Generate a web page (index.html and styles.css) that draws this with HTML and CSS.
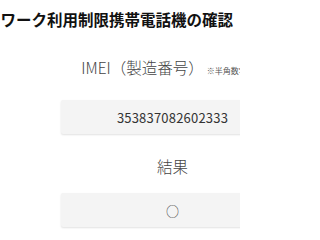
FILE: index.html
```html
<!DOCTYPE html>
<html lang="ja">
<head>
<meta charset="utf-8">
<link rel="stylesheet" href="styles.css">
</head>
<body>
<div class="page">
  <h1 class="title">ネットワーク利用制限携帯電話機の確認</h1>
  <div class="form">
    <div class="label label-imei"><span class="label-main">IMEI（製造番号）</span><span class="note">※半角数字15桁</span></div>
    <div class="field field-imei">353837082602333</div>
    <div class="label label-result"><span class="label-main">結果</span></div>
    <div class="field result">○</div>
  </div>
</div>
</body>
</html>
```
FILE: styles.css
```css
html, body {
  margin: 0;
  padding: 0;
  background: #fff;
}
body {
  font-family: "Noto Sans CJK JP", "Noto Sans", sans-serif;
  color: #333;
}
.page {
  width: 240px;
  height: 240px;
  overflow: hidden;
}
.title {
  margin: 0 0 0 -46px;
  padding-top: 9px;
  font-size: 15.5px;
  line-height: 20px;
  font-weight: 700;
  color: #111;
  white-space: nowrap;
}
.form {
  margin-left: 61px;
  width: 223px;
  display: flex;
  flex-direction: column;
}
.label {
  display: flex;
  justify-content: center;
  align-items: baseline;
  white-space: nowrap;
  height: 24px;
}
.label-imei {
  margin-top: 27px;
}
.label-result {
  margin-top: 21px;
}
.label-main {
  font-size: 15.5px;
  font-weight: 300;
  color: #444;
}
.note {
  margin-left: 3px;
  font-size: 8px;
  color: #555;
}
.field {
  margin-top: 14px;
  height: 34px;
  background: #f4f4f4;
  border-radius: 2px;
  box-shadow: 0 1px 2px rgba(0,0,0,0.12);
  display: flex;
  align-items: center;
  justify-content: center;
  font-size: 13px;
  color: #333;
  letter-spacing: 0.2px;
}
.field-imei {
  margin-top: 20px;
}
.result {
  font-size: 13px;
  color: #444;
}
```
